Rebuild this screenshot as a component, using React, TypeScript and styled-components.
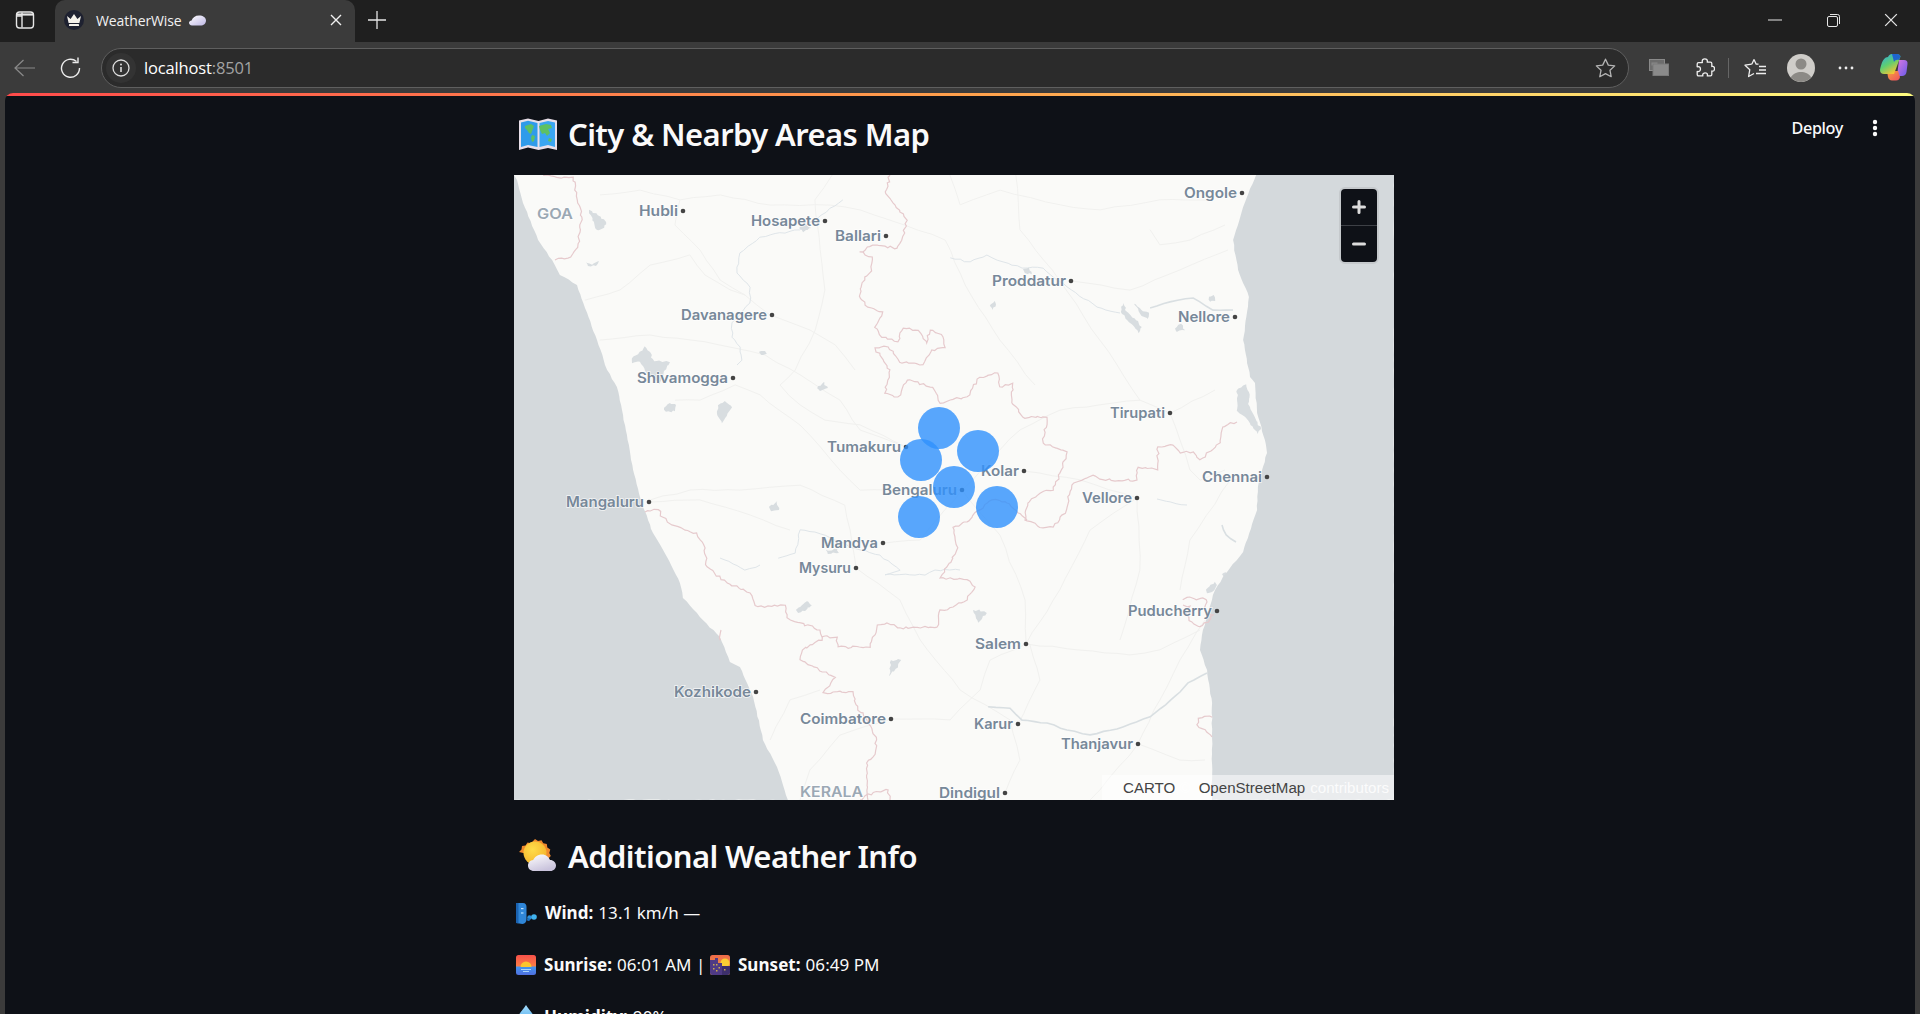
import React from "react";
import styled, { createGlobalStyle } from "styled-components";

const Global = createGlobalStyle`
  html, body { margin: 0; padding: 0; height: 1014px; overflow: hidden; background: #3b3b3b; }
  * { box-sizing: border-box; }
  #root { height: 1014px; }
`;

const Window = styled.div`
  width: 1920px; height: 1014px; display: flex; flex-direction: column; overflow: hidden;
  font-family: "Noto Sans", "Open Sans", sans-serif;
`;
const TabStrip = styled.div`
  height: 42px; background: #1f1f1f; display: flex; align-items: flex-start; flex: none;
`;
const SideButton = styled.div`
  width: 55px; height: 40px; display: flex; align-items: center; justify-content: center; padding-right: 5px; color: #e6e6e6;
`;
const Tab = styled.div`
  width: 300px; height: 42px; background: #3b3b3b; border-radius: 10px 10px 0 0; display: flex; align-items: center;
  padding: 0 13px 2px 9px; color: #f1f1f1;
`;
const Favicon = styled.div`
  width: 20px; height: 20px; border-radius: 50%; background: #1e2130; display: flex; align-items: center; justify-content: center; flex: none;
`;
const TabTitle = styled.div`
  margin-left: 12px; font: 400 14px "Open Sans", sans-serif; letter-spacing: -0.1px; flex: 1; display: flex; align-items: center; gap: 7px; white-space: nowrap;
`;
const NewTab = styled.div`
  width: 44px; height: 40px; display: flex; align-items: center; justify-content: center; color: #e6e6e6;
`;
const WindowButtons = styled.div`
  margin-left: auto; display: flex; color: #e6e6e6;
`;
const WindowButton = styled.div`
  width: 58px; height: 40px; display: flex; align-items: center; justify-content: center;
`;
const Toolbar = styled.div`
  height: 51px; background: #3b3b3b; display: flex; align-items: center; padding: 0 8px 0 0; flex: none; color: #ececec;
`;
const NavButton = styled.div<{ $w: number; $dim?: boolean }>`
  width: ${(p) => p.$w}px; height: 40px; display: flex; align-items: center; justify-content: center; flex: none;
  color: ${(p) => (p.$dim ? "#8a8a8a" : "#ececec")};
`;
const UrlBar = styled.div`
  width: 1528px; height: 40px; margin-left: 8px; margin-right: 8px; flex: none; border-radius: 20px; background: #2b2b2b; border: 1px solid #5f5f5f;
  display: flex; align-items: center; padding: 0 8px 0 4px;
`;
const InfoBubble = styled.div`
  width: 30px; height: 30px; border-radius: 50%; background: #333; display: flex; align-items: center; justify-content: center; color: #dedede;
`;
const Host = styled.span`
  margin-left: 8px; font: 400 16.5px "Open Sans", sans-serif; letter-spacing: -0.15px; color: #fff;
`;
const Port = styled.span`
  color: #a3a3a3;
`;
const UrlStar = styled.div`
  margin-left: auto; display: flex; color: #b4b4b4; padding-right: 4px;
`;
const ToolSep = styled.div`
  width: 1px; height: 20px; background: #666; flex: none;
`;

const Page = styled.div`
  flex: 1; margin: 0 5px; background: #0e1117; border-radius: 8px 8px 0 0; overflow: hidden; position: relative;
`;
const Rainbow = styled.div`
  height: 3px; background: linear-gradient(90deg, #ff4b4b, #ffa04b 50%, #fffd80);
`;
const TopRight = styled.div`
  position: absolute; top: 24px; right: 37px; display: flex; align-items: center; gap: 29px; color: #fafafa;
`;
const Deploy = styled.span`
  font: 500 16.2px "Noto Sans", sans-serif; letter-spacing: -0.35px;
`;
const Column = styled.div`
  width: 880px; margin-left: 509px;
`;
const Heading = styled.h2<{ $top: number; $after: number }>`
  margin: ${(p) => p.$top}px 0 ${(p) => p.$after}px; height: 42px; display: flex; align-items: center; gap: 11px; padding-left: 5px;
  font: 600 31px/42px "Noto Sans", sans-serif; letter-spacing: -0.6px; color: #fafafa; white-space: nowrap;
`;
const MapFrame = styled.div`
  width: 880px; height: 625px; position: relative; overflow: hidden; background: #fafaf8;
`;
const MapSvg = styled.svg`
  display: block; width: 880px; height: 625px;
`;
const MapLabel = styled.text<{ $faint?: boolean }>`
  font: 600 14.3px Inter, "Noto Sans", sans-serif;
  fill: ${(p) => (p.$faint ? "#9ba8b4" : "#778899")};
  paint-order: stroke; stroke: rgba(255,255,255,.75); stroke-width: 1.5px;
`;
const ZoomControl = styled.div`
  position: absolute; top: 12px; right: 15px; width: 40px; height: 77px; border: 2px solid #c5c9cc; border-radius: 6px; background: #0e1117;
  display: flex; flex-direction: column; color: #dcdcdc; overflow: hidden;
`;
const ZoomBtn = styled.div<{ $line?: boolean }>`
  flex: 1; display: flex; align-items: center; justify-content: center; border-top: ${(p) => (p.$line ? "1px solid #3d4046" : "none")};
`;
const Attribution = styled.div`
  position: absolute; right: 0; bottom: 0; height: 25px; width: 292px; background: rgba(255,255,255,.5); padding-left: 5px;
  font: 400 15.1px/25px "Liberation Sans", Arial, sans-serif; color: rgba(255,255,255,.85); white-space: nowrap; display: flex;
`;
const AttrLink = styled.span<{ $ml: number }>`
  color: #444; margin-left: ${(p) => p.$ml}px;
`;
const AttrText = styled.span<{ $ml: number }>`
  margin-left: ${(p) => p.$ml}px;
`;
const Para = styled.p<{ $after: number }>`
  margin: 0 0 ${(p) => p.$after}px; height: 26px; display: flex; align-items: center; padding-left: 2px;
  font: 400 17px/26px "Noto Sans", sans-serif; letter-spacing: 0.05px; color: #fafafa; white-space: pre;
`;
const Strong = styled.strong`
  font-weight: 700; margin: 0 5px 0 8px;
`;

const SidebarIcon = () => (
  <svg width="20" height="20" viewBox="0 0 20 20" fill="none" stroke="currentColor" strokeWidth="1.4">
    <rect x="1.5" y="2" width="17" height="16" rx="3" />
    <path d="M7 2.5v15M2 6h5" />
    <path d="M2 4.5h16" strokeWidth="2.2" />
  </svg>
);
const Crown = () => (
  <svg width="16" height="14" viewBox="0 0 16 14" fill="#f4f1ea">
    <path d="M1 3l3.6 3L8 1l3.4 5L15 3l-1.6 7H2.6z" />
    <rect x="3" y="11" width="10" height="2" rx=".6" />
  </svg>
);
const TabCloud = () => (
  <svg width="17" height="11" viewBox="0 0 17 11">
    <defs>
      <linearGradient id="tc" x1="0" x2="1" y1="0" y2="1">
        <stop offset="0" stopColor="#fff" />
        <stop offset="1" stopColor="#bdb6e4" />
      </linearGradient>
    </defs>
    <path fill="url(#tc)" d="M3 10.5C1 10.5 0 9 0 7.8 0 6.5 1.2 5.5 2.6 5.5 3.5 2.5 6.3.5 10 .5c4 0 7 2 7 5s-2.4 5-5.5 5z" />
  </svg>
);
const X = ({ s = 12, w = 1.4 }: { s?: number; w?: number }) => (
  <svg width={s} height={s} viewBox="0 0 12 12" stroke="currentColor" strokeWidth={w} fill="none">
    <path d="M1 1l10 10M11 1L1 11" />
  </svg>
);
const Plus = () => (
  <svg width="18" height="18" viewBox="0 0 18 18" stroke="currentColor" strokeWidth="1.3" fill="none">
    <path d="M9 0v18M0 9h18" />
  </svg>
);
const Minimize = () => (
  <svg width="14" height="2" viewBox="0 0 14 2" stroke="currentColor" fill="none"><path d="M0 1h14" /></svg>
);
const Restore = () => (
  <svg width="13" height="13" viewBox="0 0 13 13" stroke="currentColor" fill="none">
    <rect x=".5" y="2.5" width="10" height="10" rx="1.5" />
    <path d="M3 .5h7.5a2 2 0 0 1 2 2V10" />
  </svg>
);
const Back = () => (
  <svg width="21" height="18" viewBox="0 0 21 18" stroke="currentColor" strokeWidth="1.2" fill="none">
    <path d="M21 9H1M9.5 1L1 9l8.5 8" />
  </svg>
);
const Reload = () => (
  <svg width="21" height="21" viewBox="0 0 21 21" stroke="currentColor" strokeWidth="1.4" fill="none">
    <path d="M16.500 4.500A9 9 0 1 0 19.500 11" />
    <path d="M18 .5v5h-5.500" />
  </svg>
);
const Info = () => (
  <svg width="18" height="18" viewBox="0 0 18 18" stroke="currentColor" strokeWidth="1.3" fill="none">
    <circle cx="9" cy="9" r="8" />
    <path d="M9 8v5" strokeWidth="1.6" />
    <circle cx="9" cy="5.4" r="1" fill="currentColor" stroke="none" />
  </svg>
);
const StarIcon = () => (
  <svg width="21" height="20" viewBox="0 0 21 20" stroke="currentColor" strokeWidth="1.3" fill="none">
    <path d="M10.5 1.2l2.8 5.9 6.4.8-4.7 4.4 1.2 6.4-5.7-3.1-5.7 3.1 1.2-6.4L1.300 7.900l6.400-.8z" strokeLinejoin="round" />
  </svg>
);
const Collections = () => (
  <svg width="20" height="17" viewBox="0 0 20 17">
    <rect x="0.500" y="0.500" width="15" height="11" fill="#6d6d6d" stroke="#8a8a8a" />
    <rect x="2.500" y="3.500" width="6" height="3" fill="#8a8a8a" />
    <rect x="4" y="5" width="15.500" height="11.500" fill="#8a8a8a" stroke="#7a7a7a" />
  </svg>
);
const Puzzle = () => (
  <svg width="20" height="20" viewBox="0 0 20 20" stroke="#eee" strokeWidth="1.300" fill="none" strokeLinejoin="round">
    <path d="M7.200 3.200C7.200 1.800 8.400.8 9.800.8s2.600 1 2.600 2.400c0 .4-.1.700-.2 1h3.300c.8 0 1.300.5 1.300 1.300v3c.3-.1.600-.2 1-.2 1.100 0 1.700 1 1.700 2.400s-.6 2.500-1.700 2.500c-.4 0-.7-.1-1-.2v3.600c0 .8-.5 1.300-1.300 1.300h-3.200c.1-.3.200-.7.200-1 0-1.200-1.100-2-2.400-2s-2.400.8-2.400 2c0 .3.100.7.200 1H3.500c-.8 0-1.300-.5-1.300-1.300v-3.200c.3.100.6.200 1 .2 1.300 0 2.300-1.100 2.300-2.500s-1-2.400-2.300-2.400c-.4 0-.7.1-1 .2v-3c0-.8.500-1.300 1.300-1.300h3.900c-.1-.3-.2-.6-.2-1z" />
  </svg>
);
const Favorites = () => (
  <svg width="22" height="20" viewBox="0 0 22 20" stroke="#eee" strokeWidth="1.300" fill="none" strokeLinejoin="round">
    <path d="M10 1.500l2.200 4.700h2.300M7.800 6.200L1 7.200l4.800 4.500L4.600 18.500l5.400-3" />
    <path d="M7.800 6.200L10 1.500M15 8.500h7M15 12h7M12 15.500h10" />
  </svg>
);
const Avatar = () => (
  <svg width="28" height="28" viewBox="0 0 28 28">
    <circle cx="14" cy="14" r="14" fill="#cfcdc9" />
    <circle cx="14" cy="10" r="5.500" fill="#8c8a86" />
    <path d="M3.800 23.500C6 19.500 10 18 14 18s8 1.500 10.200 5.500A14 14 0 0 1 3.800 23.500z" fill="#8c8a86" />
  </svg>
);
const Dots = () => (
  <svg width="16" height="4" viewBox="0 0 16 4" fill="#eee">
    <circle cx="2" cy="2" r="1.400" /><circle cx="8" cy="2" r="1.400" /><circle cx="14" cy="2" r="1.400" />
  </svg>
);
const Copilot = () => (
  <svg width="28" height="27" viewBox="0 0 28 27">
    <defs>
      <linearGradient id="cpA" x1="0" x2="0.600" y1="0" y2="1">
        <stop offset="0" stopColor="#2ba6f0" /><stop offset=".55" stopColor="#5fcf70" /><stop offset="1" stopColor="#f6c534" />
      </linearGradient>
      <linearGradient id="cpB" x1="0" x2="1" y1="0" y2="1">
        <stop offset="0" stopColor="#d978e0" /><stop offset="1" stopColor="#6a5bea" />
      </linearGradient>
      <linearGradient id="cpC" x1="0" x2="1" y1="0" y2="1">
        <stop offset="0" stopColor="#f6a63a" /><stop offset="1" stopColor="#ef4e60" />
      </linearGradient>
    </defs>
    <path fill="url(#cpB)" d="M19 6h5c2.500 0 3.800 1.500 3.500 4l-1 8c-.4 2.500-2 4-4.500 4h-5z" />
    <path fill="url(#cpC)" d="M7 17h11l2 6c-.5 2-1.500 3.500-4 3.500h-4C10 26.500 8.500 25 8 23z" />
    <path fill="url(#cpA)" d="M8 3c.5-1.500 2-3 4-3h5c2 0 3 1 3.500 2.500L17 12l-3 8H4c-2.500 0-4-1.500-4-4 .3-2.500 1-4.500 1.500-6C2.500 6.500 5 3 8 3z" />
    <path fill="#1554d8" d="M12 0h5c2 0 3.200 1 3.500 2.500L19 6c-2-.8-4 0-5 2z" opacity=".85" />
  </svg>
);
const Kebab = () => (
  <svg width="6" height="18" viewBox="0 0 6 18" fill="#fafafa">
    <circle cx="3" cy="3" r="2.200" /><circle cx="3" cy="9" r="2.200" /><circle cx="3" cy="15" r="2.200" />
  </svg>
);

const MapEmoji = () => (
  <svg width="38" height="32" viewBox="0 0 38 32">
    <path fill="#e8dfe9" d="M0 2.500l9-2 10.500 2.500L29 .5l9 2V32l-9-2-9.500 2L9 29.500 0 32z" />
    <path fill="#2f9bea" d="M2 4.500l7-1.700 9.500 2.200V29L9 27l-7 2z" />
    <path fill="#3aa6f2" d="M20.500 5L29 3l7 1.600V29l-7-2-8.500 2z" />
    <path fill="#5ec063" d="M6 8l6-2 3 2-1.500 4-1.500 4-2-1-2-3-2-2zM13 17l3 1-1 5-2 1-1-4zM20 8l7-2 5 1 1 3-4 1 2 4-3 3-2-3-3 1-2-4zM30 20l3 1-1 3-3-1z" />
  </svg>
);
const SunCloud = () => (
  <svg width="38" height="34" viewBox="0 0 38 34">
    <defs>
      <radialGradient id="scS" cx=".4" cy=".35" r=".7"><stop offset="0" stopColor="#ffdc4a" /><stop offset="1" stopColor="#f5b52c" /></radialGradient>
      <linearGradient id="scC" x1="0" x2=".5" y1="0" y2="1"><stop offset="0" stopColor="#fff" /><stop offset="1" stopColor="#c9c3dc" /></linearGradient>
    </defs>
    <path fill="#f08a2c" d="M16 0l3 2 3.500-.8 1.800 3 3.500.7.500 3.500 3 2-1 3.500 1.500 3-2.500 2.500-.5 3.500-3.500.5-2 3-3.500-1-3 1.500-2.500-2.500-3.500-.5-.5-3.500-3-2 1-3.500L0 13l2.500-2.500.5-3.500 3.500-.5 2-3 3.500.8z" />
    <circle cx="16" cy="14" r="11.500" fill="url(#scS)" />
    <path fill="url(#scC)" d="M15 32c-3.500 0-6-2.300-6-5.500 0-3 2.300-5.300 5.200-5.500C15.500 18 18.500 15.500 23 15.500c4 0 7 2.500 8 5.500 3.500 0 6 2.500 6 5.500S34.500 32 31.500 32z" />
  </svg>
);
const WindFace = () => (
  <svg width="21" height="21" viewBox="0 0 21 21">
    <path fill="#2f86d8" d="M0 0h7c2.500 0 3.500 2 3.500 4v12c0 3-1.500 4.500-4 5L0 20z" />
    <path fill="#1a62b0" d="M0 0h2.500v20.300L0 20z" />
    <rect x="5" y="5" width="2.500" height="1.200" fill="#bfe0ff" />
    <path d="M5 9h2.500v2H5z" fill="#7fbdf2" />
    <circle cx="13.500" cy="14.500" r="2.200" fill="#2a8fdc" /><circle cx="18" cy="14" r="2.800" fill="#41b3ee" /><circle cx="12.500" cy="16.500" r="1.500" fill="#1a6fbe" />
  </svg>
);
const SunriseEmoji = () => (
  <svg width="20" height="20" viewBox="0 0 20 20">
    <defs>
      <linearGradient id="sr" x1="0" x2="0" y1="0" y2="1"><stop offset="0" stopColor="#f7504a" /><stop offset=".55" stopColor="#fb7d45" /><stop offset=".6" stopColor="#4494ee" /><stop offset="1" stopColor="#4f6fe0" /></linearGradient>
    </defs>
    <rect width="20" height="20" rx="2.500" fill="url(#sr)" />
    <path d="M4.500 12a5.500 5.500 0 0 1 11 0z" fill="#fbc52f" />
    <path d="M5 14.500h10M7 16.500h6" stroke="#a9d4fb" strokeWidth="1" />
  </svg>
);
const CityEmoji = () => (
  <svg width="20" height="20" viewBox="0 0 20 20">
    <defs>
      <linearGradient id="cd" x1="0" x2="0" y1="0" y2="1"><stop offset="0" stopColor="#ef6a4a" /><stop offset="1" stopColor="#e9a43a" /></linearGradient>
    </defs>
    <rect width="20" height="20" rx="2.500" fill="url(#cd)" />
    <circle cx="15" cy="8" r="4.500" fill="#fbce34" />
    <path fill="#4f3a85" d="M0 5h5v-2h3v5h4v12H2.500A2.500 2.500 0 0 1 0 17.500z" />
    <path fill="#3d2f6c" d="M12 11h8v6.500a2.500 2.500 0 0 1-2.500 2.500H12z" />
    <path fill="#c9a94e" d="M3 9h1.500v1.500H3zM6 9h1.500v1.500H6zM3 13h1.500v1.500H3zM8.500 12H10v1.500H8.500zM6 15h1.500v1.500H6zM14 14h1.500v1.500H14z" />
  </svg>
);
const Droplet = () => (
  <svg width="20" height="24" viewBox="0 0 20 24">
    <defs>
      <linearGradient id="dr" x1="0" x2="0" y1="0" y2="1"><stop offset="0" stopColor="#a4dcfb" /><stop offset="1" stopColor="#2f9bea" /></linearGradient>
    </defs>
    <path fill="url(#dr)" d="M10 0c3 5 9 10 9 15.500a9 8.500 0 0 1-18 0C1 10 7 5 10 0z" />
  </svg>
);

type Label = { n: string; x: number; y: number; w: number };
const labels: Label[] = [
  { n: "Hubli", x: 683, y: 211, w: 39 },
  { n: "Hosapete", x: 825, y: 221, w: 69 },
  { n: "Ballari", x: 886, y: 236, w: 46 },
  { n: "Davanagere", x: 772, y: 315, w: 86 },
  { n: "Shivamogga", x: 733, y: 378, w: 91 },
  { n: "Ongole", x: 1242, y: 193, w: 53 },
  { n: "Proddatur", x: 1071, y: 281, w: 74 },
  { n: "Nellore", x: 1235, y: 317, w: 52 },
  { n: "Tirupati", x: 1170, y: 413, w: 55 },
  { n: "Mangaluru", x: 649, y: 502, w: 78 },
  { n: "Mandya", x: 883, y: 543, w: 57 },
  { n: "Mysuru", x: 856, y: 568, w: 52 },
  { n: "Kozhikode", x: 756, y: 692, w: 77 },
  { n: "Coimbatore", x: 891, y: 719, w: 86 },
  { n: "Chennai", x: 1267, y: 477, w: 60 },
  { n: "Vellore", x: 1137, y: 498, w: 50 },
  { n: "Puducherry", x: 1217, y: 611, w: 84 },
  { n: "Salem", x: 1026, y: 644, w: 46 },
  { n: "Karur", x: 1018, y: 724, w: 39 },
  { n: "Thanjavur", x: 1138, y: 744, w: 72 },
  { n: "Dindigul", x: 1005, y: 793, w: 61 },
  { n: "Tumakuru", x: 906, y: 447, w: 74 },
  { n: "Bengaluru", x: 962, y: 490, w: 75 },
  { n: "Kolar", x: 1024, y: 471, w: 38 },
];

const circles = [
  [939, 428], [921, 460], [978, 451], [954, 487], [919, 517], [997, 507],
];

/* Deterministic roughening, so that traced outlines have the wobble of map geometry. */
const roughen = (points: string, step: number, amp: number, seed: number, closed = false) => {
  const pts = points.trim().split(/\s+/).map((s) => s.split(",").map(Number));
  if (closed) pts.push(pts[0]);
  let r = seed * 9301 + 49297;
  const rnd = () => {
    r = (r * 9301 + 49297) % 233280;
    return r / 233280 - 0.5;
  };
  const out: string[] = [];
  for (let i = 0; i < pts.length - 1; i++) {
    const [x0, y0] = pts[i];
    const [x1, y1] = pts[i + 1];
    const n = Math.max(1, Math.round(Math.hypot(x1 - x0, y1 - y0) / step));
    for (let k = 0; k < n; k++) {
      const t = k / n;
      const j = k === 0 ? 0.3 : 1;
      out.push(`${(x0 + (x1 - x0) * t + rnd() * amp * j).toFixed(1)},${(y0 + (y1 - y0) * t + rnd() * amp * j).toFixed(1)}`);
    }
  }
  out.push(pts[pts.length - 1].join(","));
  return out.join(" ");
};

const sea = [
  "514,175 517,180 523,203 538,240 552,260 560,275 577,285 585,308 597,340 607,370 617,387 622,410 633,470 643,507 653,533 667,557 680,583 683,598 700,617 720,637 730,662 740,667 753,697 763,740 777,767 788,800 514,800",
  "1256,175 1243,207 1233,240 1238,270 1249,297 1243,340 1250,377 1255,383 1257,413 1265,440 1267,453 1262,470 1258,487 1257,510 1243,552 1223,577 1213,595 1203,630 1200,650 1207,670 1212,703 1212,800 1394,800 1394,175",
];
const lakes = [
  "589,210 598,215 606,222 604,228 597,230 594,222",
  "586,262 592,265 599,261 596,266 588,266",
  "632,358 640,352 645,346 650,352 654,361 670,362 664,371 660,384 655,380 646,372 640,362 632,363",
  "664,408 670,403 676,405 675,411 666,412",
  "718,405 725,401 732,407 727,416 722,423 717,414",
  "759,352 765,351 767,354 761,355",
  "817,388 824,382 828,388 820,391",
  "799,228 805,224 811,228 803,232",
  "769,507 777,501 779,510 771,511",
  "796,610 807,601 812,605 805,611 798,613",
  "826,550 837,549 839,553 828,554",
  "891,660 901,660 896,669 889,676",
  "973,610 984,611 987,613 982,618 978,623 975,615",
  "1123,303 1127,312 1136,320 1142,327 1139,333 1129,322 1121,312",
  "1134,303 1141,310 1149,313 1148,319 1140,314",
  "1209,297 1214,295 1215,301 1210,302",
  "1175,328 1181,324 1185,330 1177,332",
  "991,304 995,301 996,304 993,310 990,306",
  "1023,269 1029,268 1032,274 1025,273",
  "1237,390 1246,384 1249,392 1248,404 1253,414 1261,429 1258,434 1245,417 1237,411",
  "1206,590 1215,582 1217,585 1212,592 1207,593",
  "1222,574 1226,572 1226,576 1224,577",
];
const boundaries = [
  "543,175 557,177 573,177 575,190 578,203 582,217 580,230 578,247 568,258 555,260",
  "890,175 885,192 893,203 907,220 902,240 897,248 873,245 860,252 872,257 870,273 862,283 860,298 868,307 883,312 875,327 882,337 898,342 903,328 918,330 927,343 930,330 943,337 945,348 932,350 923,365 900,362 888,347 875,348 890,370 885,393 898,397 907,380 933,387 940,403 950,400 967,397 980,377 998,373 1000,387 1013,383 1012,403 1023,417 1047,417 1043,443 1067,452 1060,473 1053,490 1040,493 1028,503 1025,520 1043,528 1053,527 1065,513 1072,485 1093,475 1103,480 1137,480 1138,467 1158,470 1158,447 1173,445 1180,453 1193,452 1200,460 1220,443 1223,427 1237,422",
  "645,512 658,510 667,522 690,532 697,533 705,548 707,567 727,583 750,593 758,607 785,605 787,618 800,623 820,630 822,640 802,650 800,660 835,677 823,693 853,692 858,710 863,713 877,740 873,757 867,763 868,800",
  "822,637 837,637 838,647 870,647 877,625 887,623 900,628 937,627 940,610 950,608 967,600 975,587 967,580 950,578 940,578 947,567 958,548 955,540 953,527 967,522 975,513 992,500 1007,503 1018,513 1027,520",
  "1183,600 1190,597 1196,600 1203,598 1207,602 1205,610 1213,615 1208,622 1200,627 1192,622 1186,614 1190,606 1183,605",
  "1212,717 1198,718 1197,725 1205,730 1212,737",
  "720,640 721,630",
  "860,800 873,792 888,790 890,800",
];
const rivers = [
  "843,200 800,230 760,237 740,253 737,273 750,287 750,303 732,323 732,337 740,347 742,360 737,365",
  "950,258 970,262 987,255 1003,262 1022,268 1043,268 1067,287 1097,307 1120,313",
  "778,558 795,553 800,530 815,532 835,540 860,550 880,555 900,570 885,575 925,575 935,570 960,570",
  "720,558 745,570 760,565",
  "1157,499 1170,502 1187,505",
];
const thickRivers = [
  "1150,308 1170,302 1193,298 1213,310 1233,310",
  "988,707 1010,708 1022,720 1047,723 1067,730 1090,735 1123,727 1150,717 1180,692 1188,683 1207,673",
  "1222,525 1226,535 1236,542",
];
const roads = [
  "600,195 640,190 680,200 720,195 770,205 830,205 860,210",
  "680,200 675,225 700,250 720,280 745,295 770,315 810,330 835,345 855,370",
  "585,300 620,290 650,265 690,255 705,275 730,290 745,295",
  "600,340 650,335 690,340 720,345 765,355 800,375 840,400 860,430 906,447",
  "832,175 815,200 820,250 825,290 815,330 795,370 780,385",
  "860,210 905,225 945,240 965,285 1000,340 1035,385",
  "906,447 860,425 825,420 800,405 780,385",
  "675,400 700,400 735,385 760,395 800,425 840,470 860,490 915,490 962,490",
  "950,175 960,205 1000,190 1060,205 1100,210 1160,200 1210,200",
  "1016,175 1020,230 1060,281 1100,340 1140,400 1170,413 1215,390",
  "1071,281 1130,290 1180,270 1228,250",
  "1150,230 1160,245 1190,240 1225,225",
  "1140,400 1060,410 1020,430 1000,450 962,490",
  "1170,413 1190,470 1200,480 1225,470",
  "1137,498 1090,530 1060,590 1026,644",
  "962,490 1000,535 1025,600 1026,644 1080,650 1130,655 1160,650 1200,630",
  "1026,644 990,660 980,690 950,720 891,719 840,735 810,770 800,800",
  "1018,724 1040,680 1030,645",
  "1138,744 1100,790 1090,800",
  "1138,744 1160,700 1180,660 1205,620",
  "1267,477 1230,480 1190,540 1180,590",
  "856,568 900,600 920,640 960,690 1010,720",
  "856,568 850,530 845,505 800,485 740,490 690,490 650,500",
  "649,502 700,500 750,515 790,530",
  "770,740 790,700 820,690",
  "1010,720 1020,760 1005,793",
  "1138,744 1180,760 1205,760",
  "883,543 920,540 962,490",
  "1024,471 1080,480 1137,498",
  "1137,498 1140,570 1120,640",
];
const MapChart = () => (
  <MapSvg viewBox="514 175 880 625">
    <rect x="514" y="175" width="880" height="625" fill="#fafaf8" />
    {roads.map((p, i) => (
      <polyline key={p} points={roughen(p, 14, 1.6, i + 1)} fill="none" stroke="#f1f1ef" strokeWidth="1" />
    ))}
    {rivers.map((p, i) => (
      <polyline key={p} points={roughen(p, 5, 1.8, i + 40)} fill="none" stroke="#dfe5e9" strokeWidth="1" />
    ))}
    {thickRivers.map((p, i) => (
      <polyline key={p} points={roughen(p, 7, 1.2, i + 60)} fill="none" stroke="#d9dfe2" strokeWidth="1.600" />
    ))}
    {lakes.map((p, i) => (
      <polygon key={p} points={roughen(p, 2.5, 2, i + 80, true)} fill="#d8dde0" />
    ))}
    {sea.map((p, i) => (
      <polygon key={p} points={roughen(p, 5, 0.9, i + 120)} fill="#d4d9dc" />
    ))}
    {boundaries.map((p, i) => (
      <polyline key={p} points={roughen(p, 3.2, 2.6, i + 140)} fill="none" stroke="#e6cacd" strokeWidth="1.200" />
    ))}
    <MapLabel x="537" y="219" textLength="36" lengthAdjust="spacingAndGlyphs" $faint>GOA</MapLabel>
    <MapLabel x="800" y="797" textLength="63" lengthAdjust="spacingAndGlyphs" $faint>KERALA</MapLabel>
    {labels.map((l) => (
      <g key={l.n}>
        <MapLabel x={l.x - 5 - l.w} y={l.y + 5} textLength={l.w} lengthAdjust="spacingAndGlyphs">{l.n}</MapLabel>
        <circle cx={l.x} cy={l.y} r="2.300" fill="#444" />
      </g>
    ))}
    {circles.map(([x, y]) => (
      <circle key={x} cx={x} cy={y} r="21" fill="rgba(48,145,253,.8)" />
    ))}
  </MapSvg>
);

export default function App() {
  return (
    <Window>
      <Global />
      <TabStrip>
        <SideButton><SidebarIcon /></SideButton>
        <Tab>
          <Favicon><Crown /></Favicon>
          <TabTitle>WeatherWise <TabCloud /></TabTitle>
          <X />
        </Tab>
        <NewTab><Plus /></NewTab>
        <WindowButtons>
          <WindowButton><Minimize /></WindowButton>
          <WindowButton><Restore /></WindowButton>
          <WindowButton><X s={14} w={1.1} /></WindowButton>
        </WindowButtons>
      </TabStrip>
      <Toolbar>
        <NavButton $w={48} $dim><Back /></NavButton>
        <NavButton $w={45}><Reload /></NavButton>
        <UrlBar>
          <InfoBubble><Info /></InfoBubble>
          <Host>localhost<Port>:8501</Port></Host>
          <UrlStar><StarIcon /></UrlStar>
        </UrlBar>
        <NavButton $w={44}><Collections /></NavButton>
        <NavButton $w={47}><Puzzle /></NavButton>
        <ToolSep />
        <NavButton $w={52}><Favorites /></NavButton>
        <NavButton $w={40}><Avatar /></NavButton>
        <NavButton $w={50}><Dots /></NavButton>
        <NavButton $w={46}><Copilot /></NavButton>
      </Toolbar>
      <Page>
        <Rainbow />
        <TopRight>
          <Deploy>Deploy</Deploy>
          <Kebab />
        </TopRight>
        <Column>
          <Heading $top={17} $after={20}><MapEmoji /> City &amp; Nearby Areas Map</Heading>
          <MapFrame>
            <MapChart />
            <ZoomControl>
              <ZoomBtn>
                <svg width="14" height="14" viewBox="0 0 14 14" stroke="currentColor" strokeWidth="3" strokeLinecap="round"><path d="M7 1.500v11M1.500 7h11" /></svg>
              </ZoomBtn>
              <ZoomBtn $line>
                <svg width="14" height="4" viewBox="0 0 14 4" stroke="currentColor" strokeWidth="3" strokeLinecap="round"><path d="M1.500 2h11" /></svg>
              </ZoomBtn>
            </ZoomControl>
            <Attribution>
              <AttrLink $ml={16}>CARTO</AttrLink>
              <AttrText $ml={0}>,</AttrText>
              <AttrText $ml={0}> ©</AttrText>
              <AttrLink $ml={8}>OpenStreetMap</AttrLink>
              <AttrText $ml={5}>contributors</AttrText>
            </Attribution>
          </MapFrame>
          <Heading $top={35} $after={23}><SunCloud /> Additional Weather Info</Heading>
          <Para $after={26}><WindFace /><Strong>Wind:</Strong>13.1 km/h —</Para>
          <Para $after={26}><SunriseEmoji /><Strong>Sunrise:</Strong>06:01 AM | <CityEmoji /><Strong>Sunset:</Strong>06:49 PM</Para>
          <Para $after={26}><Droplet /><Strong>Humidity:</Strong>90%</Para>
        </Column>
      </Page>
    </Window>
  );
}
